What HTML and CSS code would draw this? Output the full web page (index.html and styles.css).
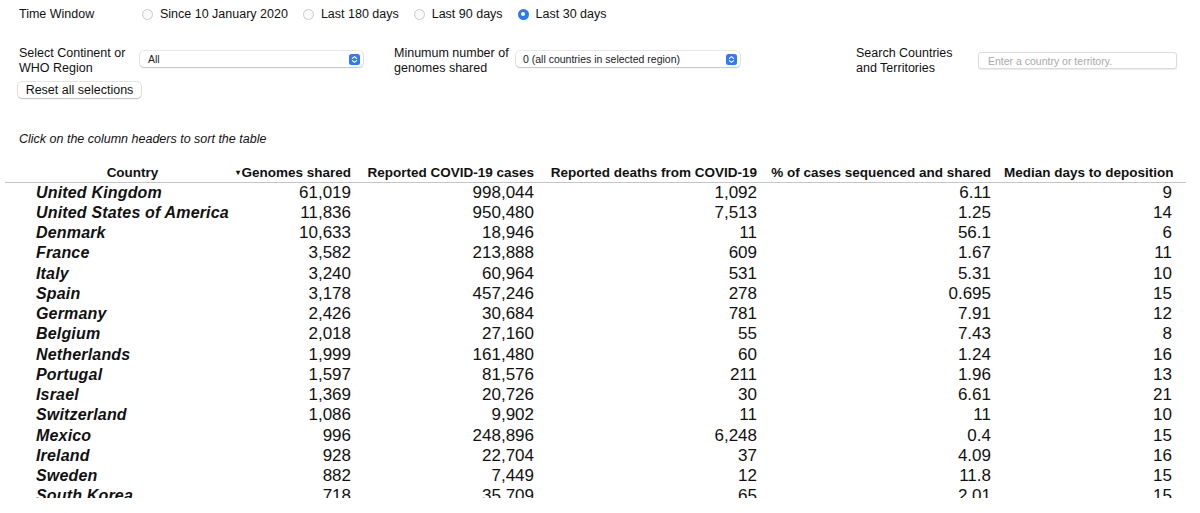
FILE: index.html
```html
<!DOCTYPE html>
<html lang="en">
<head>
<meta charset="utf-8">
<title>Genomes shared by country</title>
<link rel="stylesheet" href="styles.css">
</head>
<body>
<div class="controls">
  <div class="time-row">
    <span class="time-label">Time Window</span>
    <label class="radio"><span class="dot"></span><span>Since 10 January 2020</span></label>
    <label class="radio"><span class="dot"></span><span>Last 180 days</span></label>
    <label class="radio"><span class="dot"></span><span>Last 90 days</span></label>
    <label class="radio checked"><span class="dot"></span><span>Last 30 days</span></label>
  </div>
  <div class="filter-row">
    <div class="group g1">
      <div class="flabel">Select Continent or<br>WHO Region</div>
      <div class="select s1"><span>All</span>
        <svg class="arrow" viewBox="0 0 11 11" width="11" height="11"><rect x="0" y="0" width="11" height="11" rx="2.5" fill="#2f7bf5"/><path d="M3.4 4.4 5.5 2.6 7.6 4.4M3.4 6.6 5.5 8.4 7.6 6.6" fill="none" stroke="#fff" stroke-width="1.2" stroke-linecap="round" stroke-linejoin="round"/></svg>
      </div>
    </div>
    <div class="group g2">
      <div class="flabel">Minumum number of<br>genomes shared</div>
      <div class="select s2"><span>0 (all countries in selected region)</span>
        <svg class="arrow" viewBox="0 0 11 11" width="11" height="11"><rect x="0" y="0" width="11" height="11" rx="2.5" fill="#2f7bf5"/><path d="M3.4 4.4 5.5 2.6 7.6 4.4M3.4 6.6 5.5 8.4 7.6 6.6" fill="none" stroke="#fff" stroke-width="1.2" stroke-linecap="round" stroke-linejoin="round"/></svg>
      </div>
    </div>
    <div class="group g3">
      <div class="flabel">Search Countries<br>and Territories</div>
      <input class="search" type="text" placeholder="Enter a country or territory.">
    </div>
  </div>
  <button class="reset" type="button">Reset all selections</button>
</div>
<p class="hint">Click on the column headers to sort the table</p>
<div class="table-wrap">
<table class="data">
  <colgroup>
    <col class="c1"><col class="c2"><col class="c3"><col class="c4"><col class="c5"><col class="c6">
  </colgroup>
  <thead>
    <tr>
      <th class="country-h">Country</th>
      <th><span class="sort">&#9662;</span>Genomes shared</th>
      <th>Reported COVID-19 cases</th>
      <th>Reported deaths from COVID-19</th>
      <th>% of cases sequenced and shared</th>
      <th class="last">Median days to deposition</th>
    </tr>
  </thead>
  <tbody>
    <tr><td class="country">United Kingdom</td><td>61,019</td><td>998,044</td><td>1,092</td><td>6.11</td><td class="last">9</td></tr>
    <tr><td class="country">United States of America</td><td>11,836</td><td>950,480</td><td>7,513</td><td>1.25</td><td class="last">14</td></tr>
    <tr><td class="country">Denmark</td><td>10,633</td><td>18,946</td><td>11</td><td>56.1</td><td class="last">6</td></tr>
    <tr><td class="country">France</td><td>3,582</td><td>213,888</td><td>609</td><td>1.67</td><td class="last">11</td></tr>
    <tr><td class="country">Italy</td><td>3,240</td><td>60,964</td><td>531</td><td>5.31</td><td class="last">10</td></tr>
    <tr><td class="country">Spain</td><td>3,178</td><td>457,246</td><td>278</td><td>0.695</td><td class="last">15</td></tr>
    <tr><td class="country">Germany</td><td>2,426</td><td>30,684</td><td>781</td><td>7.91</td><td class="last">12</td></tr>
    <tr><td class="country">Belgium</td><td>2,018</td><td>27,160</td><td>55</td><td>7.43</td><td class="last">8</td></tr>
    <tr><td class="country">Netherlands</td><td>1,999</td><td>161,480</td><td>60</td><td>1.24</td><td class="last">16</td></tr>
    <tr><td class="country">Portugal</td><td>1,597</td><td>81,576</td><td>211</td><td>1.96</td><td class="last">13</td></tr>
    <tr><td class="country">Israel</td><td>1,369</td><td>20,726</td><td>30</td><td>6.61</td><td class="last">21</td></tr>
    <tr><td class="country">Switzerland</td><td>1,086</td><td>9,902</td><td>11</td><td>11</td><td class="last">10</td></tr>
    <tr><td class="country">Mexico</td><td>996</td><td>248,896</td><td>6,248</td><td>0.4</td><td class="last">15</td></tr>
    <tr><td class="country">Ireland</td><td>928</td><td>22,704</td><td>37</td><td>4.09</td><td class="last">16</td></tr>
    <tr><td class="country">Sweden</td><td>882</td><td>7,449</td><td>12</td><td>11.8</td><td class="last">15</td></tr>
    <tr><td class="country">South Korea</td><td>718</td><td>35,709</td><td>65</td><td>2.01</td><td class="last">15</td></tr>
  </tbody>
</table>
</div>
</body>
</html>
```

FILE: styles.css
```css
* { box-sizing: border-box; }

html, body {
  margin: 0;
  padding: 0;
  background: #fff;
  color: #111;
  font-family: "Liberation Sans", Arial, Helvetica, sans-serif;
}

.controls {
  padding-left: 19px;
  font-size: 12.5px;
}

.time-row {
  display: flex;
  align-items: center;
  height: 28px;
}

.time-label {
  width: 123px;
}

.radio {
  display: flex;
  align-items: center;
  margin-right: 15px;
}

.radio .dot {
  width: 11px;
  height: 11px;
  border-radius: 50%;
  border: 1px solid #c9c9c9;
  background: #fafafa;
  margin-right: 7px;
  display: flex;
  align-items: center;
  justify-content: center;
}

.radio.checked .dot {
  border: none;
  background: #2a7af3;
}

.radio.checked .dot::after {
  content: "";
  width: 4px;
  height: 4px;
  border-radius: 50%;
  background: #fff;
}

.filter-row {
  display: flex;
  align-items: flex-start;
  margin-top: 17.5px;
}

.group {
  display: flex;
  align-items: flex-start;
}

.flabel {
  width: 121px;
  line-height: 15px;
  white-space: nowrap;
}

.g2 { margin-left: 31px; }
.g3 { margin-left: 116px; }
.g2 .flabel { width: 122px; }
.g3 .flabel { width: 122px; }

.select {
  display: flex;
  align-items: center;
  justify-content: space-between;
  height: 16px;
  margin-top: 5.5px;
  padding: 0 3px 0 8px;
  background: #fff;
  border-radius: 4px;
  box-shadow: 0 0 0 0.5px rgba(0, 0, 0, 0.18), 0 1px 1.5px rgba(0, 0, 0, 0.16);
  font-size: 10.5px;
  color: #222;
}

.s1 { width: 223px; }
.s2 { width: 224px; padding-left: 7px; }

.arrow { display: block; }

.search {
  width: 199px;
  height: 17px;
  margin-top: 6.5px;
  padding: 0 9px;
  border: 1px solid #dcdcdc;
  border-radius: 3px;
  box-shadow: 0 1px 1px rgba(0, 0, 0, 0.08);
  font-family: "Liberation Sans", Arial, sans-serif;
  font-size: 10.5px;
  outline: none;
}

.search::placeholder { color: #a9a9a9; }

.reset {
  display: block;
  margin: 6.5px 0 0 -1px;
  height: 16px;
  width: 123px;
  padding: 0;
  background: #fff;
  border: none;
  border-radius: 4px;
  box-shadow: 0 0 0 0.5px rgba(0, 0, 0, 0.2), 0 1px 1.5px rgba(0, 0, 0, 0.18);
  font-family: "Liberation Sans", Arial, sans-serif;
  font-size: 12.5px;
  line-height: 16px;
  color: #111;
}

.hint {
  margin: 33.5px 0 0 19px;
  font-size: 12.5px;
  line-height: 15px;
  font-style: italic;
}

.table-wrap {
  margin-top: 17.5px;
  margin-left: 5px;
  width: 1181px;
  height: 334px;
  overflow: hidden;
}

.data {
  width: 1181px;
  table-layout: fixed;
  border-collapse: collapse;
}

.c1 { width: 224px; }
.c2 { width: 129px; }
.c3 { width: 183px; }
.c4 { width: 223px; }
.c5 { width: 234px; }
.c6 { width: 188px; }

.data th {
  font-size: 13.5px;
  font-weight: bold;
  line-height: 16px;
  padding: 0.5px 7px 1px 6px;
  text-align: right;
  white-space: nowrap;
  border-bottom: 1px solid #c6c6c6;
  color: #111;
}

.data th.country-h {
  text-align: center;
  padding-left: 31px;
  padding-right: 0;
}

.data th.last, .data td.last {
  padding-right: 14px;
}

.sort {
  font-size: 8px;
  vertical-align: 2px;
  margin-right: 1px;
}

.data td {
  font-size: 17px;
  line-height: 20.27px;
  padding: 0 7px 0 6px;
  text-align: right;
  white-space: nowrap;
  color: #111;
}

.data td.country {
  text-align: left;
  font-size: 16px;
  letter-spacing: 0.17px;
  font-weight: bold;
  font-style: italic;
  padding-left: 31px;
  padding-right: 0;
}
```
